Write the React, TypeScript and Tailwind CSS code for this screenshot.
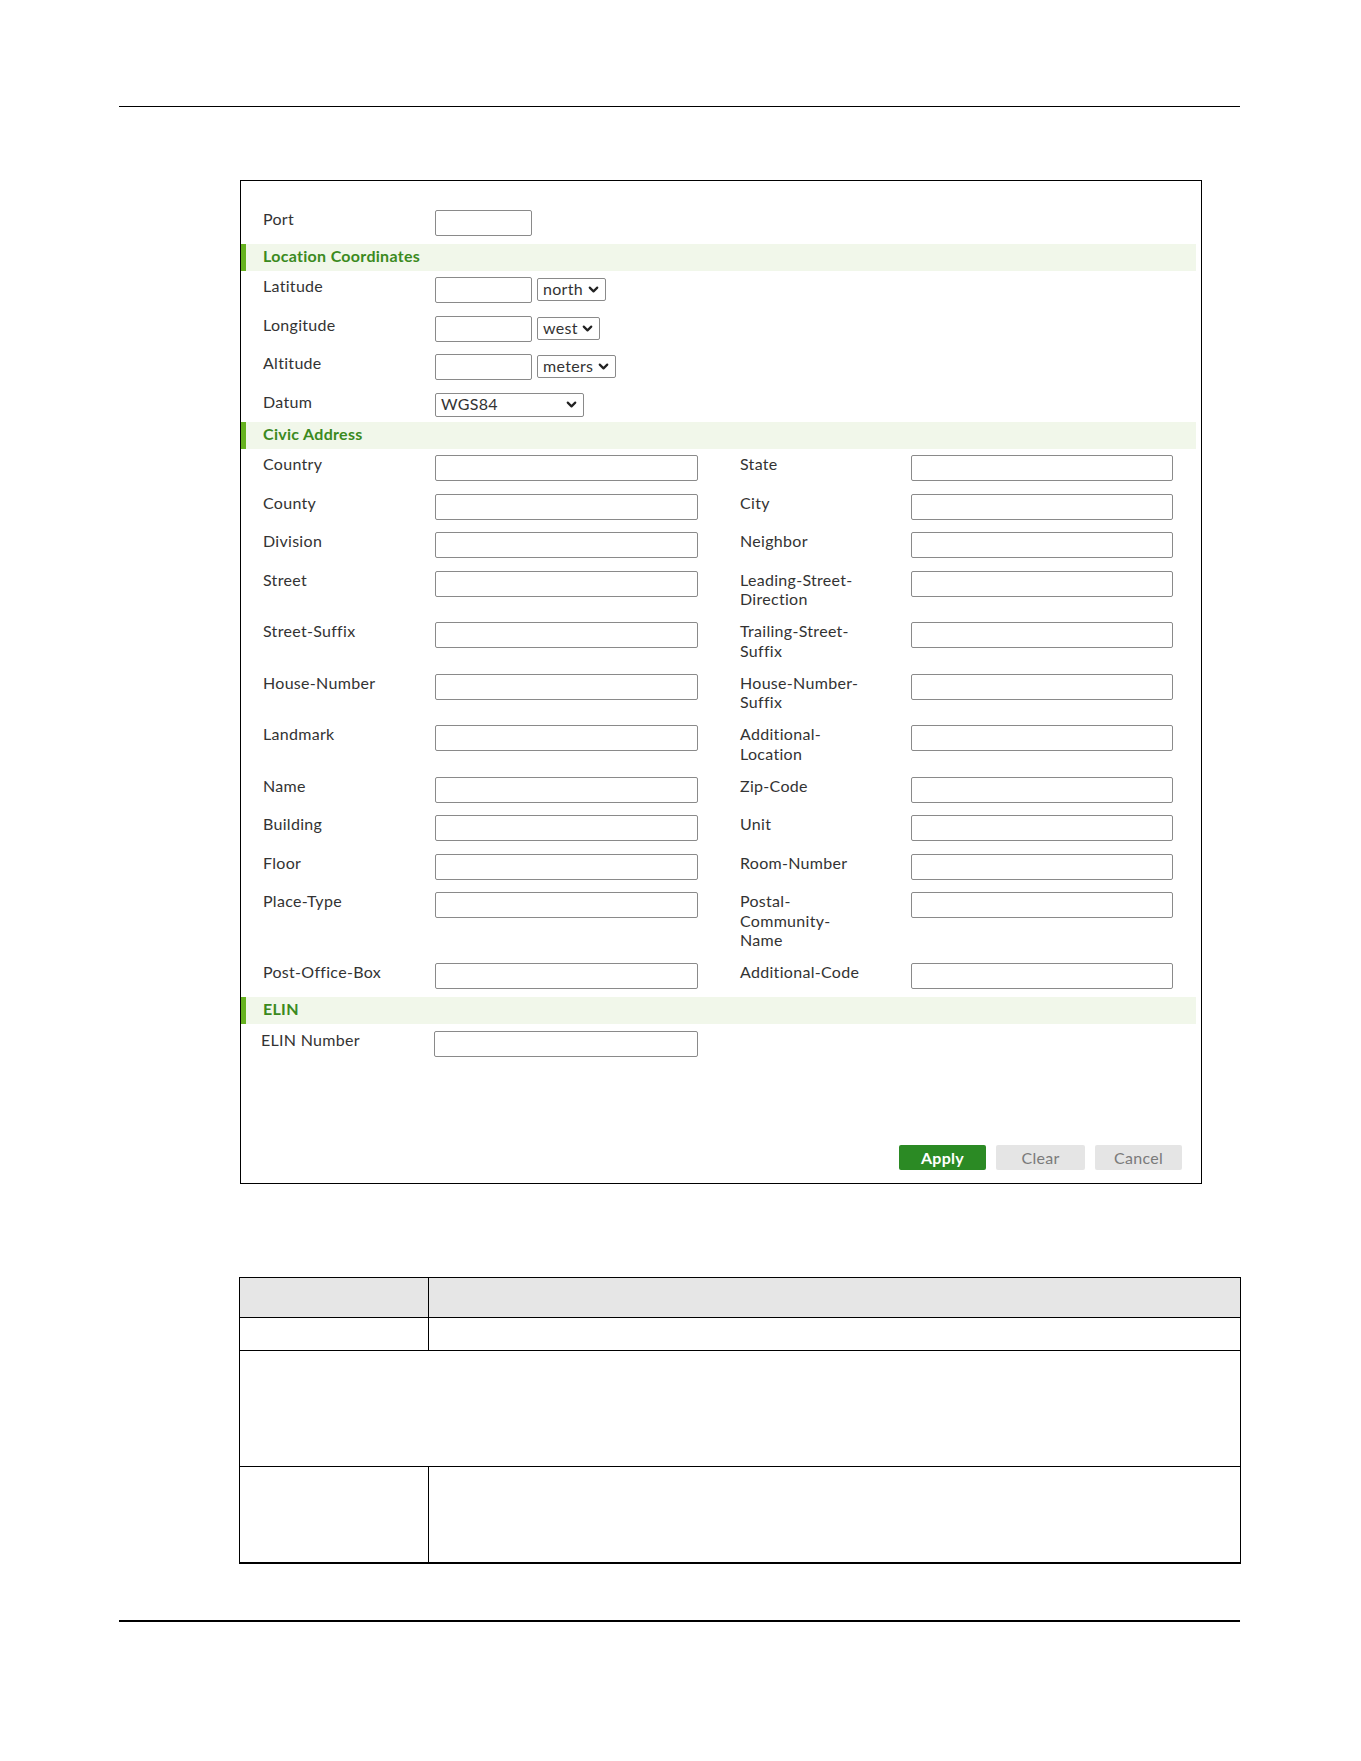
import { ChevronDown } from 'lucide-react'

const CIVIC_ROWS: [string, string][] = [
  ['Country', 'State'],
  ['County', 'City'],
  ['Division', 'Neighbor'],
  ['Street', 'Leading-Street-\nDirection'],
  ['Street-Suffix', 'Trailing-Street-\nSuffix'],
  ['House-Number', 'House-Number-\nSuffix'],
  ['Landmark', 'Additional-\nLocation'],
  ['Name', 'Zip-Code'],
  ['Building', 'Unit'],
  ['Floor', 'Room-Number'],
  ['Place-Type', 'Postal-\nCommunity-\nName'],
  ['Post-Office-Box', 'Additional-Code'],
]

const label = '-mt-px mb-px text-[16px] leading-[19.5px] text-[#333] whitespace-pre-line'

function TextBox({ width }: { width: string }) {
  return <div className={`${width} h-[26px] shrink-0 rounded-[2px] border border-[#8a8a8a] bg-white`} />
}

function Select({ value, width, height = 'h-[23px]' }: { value: string; width: string; height?: string }) {
  return (
    <div
      className={`${width} ${height} shrink-0 flex items-center justify-between pl-[5px] pr-[4px] rounded-[2px] border border-[#8a8a8a] bg-white text-[16px] text-[#333]`}
    >
      <span className="leading-none -mt-px">{value}</span>
      <ChevronDown size={15} strokeWidth={3.5} className="text-[#222]" />
    </div>
  )
}

function Band({ title }: { title: string }) {
  return (
    <div className="mr-[5px] h-[27px] flex items-center pb-[3px] bg-[#f1f7ea] border-l-[5px] border-[#66b21f] pl-[17px]">
      <span className="text-[16px] font-bold text-[#3b8a1e]">{title}</span>
    </div>
  )
}

export default function App() {
  return (
    <div className="w-[1361px] min-h-[1761px] bg-white pt-[106px] font-['Lato','Liberation_Sans',sans-serif] tracking-[0.3px]">
      {/* page rule */}
      <div className="ml-[119px] w-[1121px] h-px bg-black" />

      {/* settings panel */}
      <div className="mt-[73px] ml-[240px] w-[962px] h-[1004px] border border-black flex flex-col">
        <div className="pt-[29px] pl-[22px] flex items-start">
          <div className={`w-[172px] ${label}`}>Port</div>
          <TextBox width="w-[97px]" />
        </div>

        <div className="mt-[8px]">
          <Band title="Location Coordinates" />
        </div>

        <div className="mt-[6px] pl-[22px] flex flex-col gap-[12.5px]">
          <div className="flex items-start">
            <div className={`w-[172px] ${label}`}>Latitude</div>
            <TextBox width="w-[97px]" />
            <div className="ml-[5px] mt-px">
              <Select value="north" width="w-[69px]" />
            </div>
          </div>
          <div className="flex items-start">
            <div className={`w-[172px] ${label}`}>Longitude</div>
            <TextBox width="w-[97px]" />
            <div className="ml-[5px] mt-px">
              <Select value="west" width="w-[63px]" />
            </div>
          </div>
          <div className="flex items-start">
            <div className={`w-[172px] ${label}`}>Altitude</div>
            <TextBox width="w-[97px]" />
            <div className="ml-[5px] mt-px">
              <Select value="meters" width="w-[79px]" />
            </div>
          </div>
          <div className="flex items-start">
            <div className={`w-[172px] ${label}`}>Datum</div>
            <Select value="WGS84" width="w-[149px]" height="h-[24px]" />
          </div>
        </div>

        <div className="mt-[5.5px]">
          <Band title="Civic Address" />
        </div>

        <div className="mt-[6px] pl-[22px] flex flex-col gap-[12.5px]">
          {CIVIC_ROWS.map(([left, right]) => (
            <div key={left} className="flex items-start">
              <div className={`w-[172px] ${label}`}>{left}</div>
              <TextBox width="w-[263px]" />
              <div className={`ml-[42px] w-[171px] ${label}`}>{right}</div>
              <TextBox width="w-[262px]" />
            </div>
          ))}
        </div>

        <div className="mt-[8px]">
          <Band title="ELIN" />
        </div>

        <div className="mt-[7px] pl-[20px] flex items-start">
          <div className={`w-[173px] ${label}`}>ELIN Number</div>
          <TextBox width="w-[264px]" />
        </div>

        <div className="mt-auto pb-[13px] pr-[19px] flex justify-end gap-[10px]">
          <button className="w-[87px] h-[25px] rounded-[2px] bg-[#2b8a24] text-white text-[16px] font-bold">
            Apply
          </button>
          <button className="w-[89px] h-[25px] rounded-[2px] bg-[#e5e5e5] text-[#7a7a7a] text-[16px]">
            Clear
          </button>
          <button className="w-[87px] h-[25px] rounded-[2px] bg-[#e5e5e5] text-[#7a7a7a] text-[16px]">
            Cancel
          </button>
        </div>
      </div>

      {/* description table */}
      <div className="mt-[93px] ml-[239px] w-[1002px] border-t border-l border-r border-b-2 border-black">
        <div className="flex h-[40px] bg-[#e6e6e6] border-b border-black">
          <div className="w-[189px] border-r border-black" />
          <div className="flex-1" />
        </div>
        <div className="flex h-[33px] border-b border-black">
          <div className="w-[189px] border-r border-black" />
          <div className="flex-1" />
        </div>
        <div className="h-[116px] border-b border-black" />
        <div className="flex h-[95px]">
          <div className="w-[189px] border-r border-black" />
          <div className="flex-1" />
        </div>
      </div>

      {/* page rule */}
      <div className="mt-[56px] ml-[119px] w-[1121px] h-[2px] bg-black" />
    </div>
  )
}
